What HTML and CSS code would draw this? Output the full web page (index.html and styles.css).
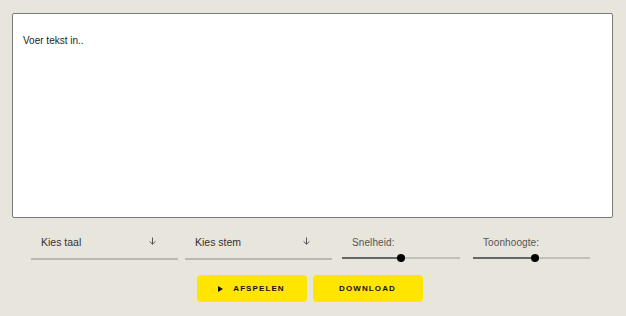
FILE: index.html
```html
<!DOCTYPE html>
<html lang="nl">
<head>
  <meta charset="UTF-8">
  <title>Tekst naar spraak</title>
  <link rel="stylesheet" href="styles.css">
</head>
<body>
  <textarea id="tekst" class="invoer" placeholder="Voer tekst in.."></textarea>

  <div class="opties">
    <div class="keuze">
      <span>Kies taal</span>
      <svg class="pijl" width="7" height="8" viewBox="0 0 7 8"><path d="M3.5 0.5V7.2M0.6 4.4L3.5 7.2L6.4 4.4" fill="none" stroke="#555" stroke-width="1"/></svg>
    </div>
    <div class="keuze">
      <span>Kies stem</span>
      <svg class="pijl" width="7" height="8" viewBox="0 0 7 8"><path d="M3.5 0.5V7.2M0.6 4.4L3.5 7.2L6.4 4.4" fill="none" stroke="#555" stroke-width="1"/></svg>
    </div>
    <div class="schuif">
      <label>Snelheid:</label>
      <div class="baan">
        <div class="vulling" style="width: 50%"></div>
        <div class="knop" style="left: 50%"></div>
      </div>
    </div>
    <div class="schuif schuif-laatste">
      <label>Toonhoogte:</label>
      <div class="baan">
        <div class="vulling" style="width: 53%"></div>
        <div class="knop" style="left: 53%"></div>
      </div>
    </div>
  </div>

  <div class="knoppen">
    <button class="knop-geel"><span class="play"></span>AFSPELEN</button>
    <button class="knop-geel">DOWNLOAD</button>
  </div>
</body>
</html>
```

FILE: styles.css
```css
body {
  margin: 0;
  padding: 13px 13px 0 12px;
  background: #e8e5dc;
  font-family: "Liberation Sans", Arial, sans-serif;
}
.invoer {
  display: block;
  box-sizing: border-box;
  width: 601px;
  height: 205px;
  margin: 0;
  padding: 21px 10px;
  border: 1px solid #7a7a78;
  border-radius: 2px;
  background: #fff;
  font-family: "Liberation Sans", Arial, sans-serif;
  font-size: 10px;
  resize: none;
  outline: none;
}
.invoer::placeholder {
  color: #222;
}
.opties {
  display: flex;
  align-items: flex-start;
  margin-top: 13px;
  padding-left: 19px;
}
.keuze {
  box-sizing: border-box;
  width: 147px;
  height: 29px;
  margin-right: 7px;
  padding: 5px 22px 0 10px;
  display: flex;
  justify-content: space-between;
  align-items: flex-start;
  border-bottom: 2px solid #bcb9b0;
  font-size: 10.5px;
  color: #333;
}
.keuze:nth-child(2) {
  margin-right: 10px;
}
.pijl {
  margin-top: 1px;
}
.schuif {
  width: 118px;
  margin-right: 13px;
}
.schuif-laatste {
  width: 117px;
}
.schuif label {
  display: block;
  padding: 6px 0 0 10px;
  font-size: 10px;
  letter-spacing: 0.1px;
  color: #555;
}
.baan {
  position: relative;
  height: 2px;
  margin-top: 9px;
  background: #c2bfb6;
}
.vulling {
  height: 2px;
  background: #666;
}
.knop {
  position: absolute;
  top: -3px;
  width: 8px;
  height: 8px;
  margin-left: -4px;
  border-radius: 50%;
  background: #000;
}
.knoppen {
  display: flex;
  justify-content: center;
  gap: 6px;
  margin-top: 15px;
  padding-right: 6px;
}
.knop-geel {
  width: 110px;
  height: 27px;
  border: none;
  border-radius: 4px;
  background: #ffe500;
  font-family: "Liberation Sans", Arial, sans-serif;
  font-size: 8px;
  font-weight: bold;
  letter-spacing: 1.1px;
  color: #111;
  display: flex;
  align-items: center;
  justify-content: center;
}
.play {
  width: 0;
  height: 0;
  margin-right: 10px;
  border-left: 5px solid #111;
  border-top: 3px solid transparent;
  border-bottom: 3px solid transparent;
}
```
